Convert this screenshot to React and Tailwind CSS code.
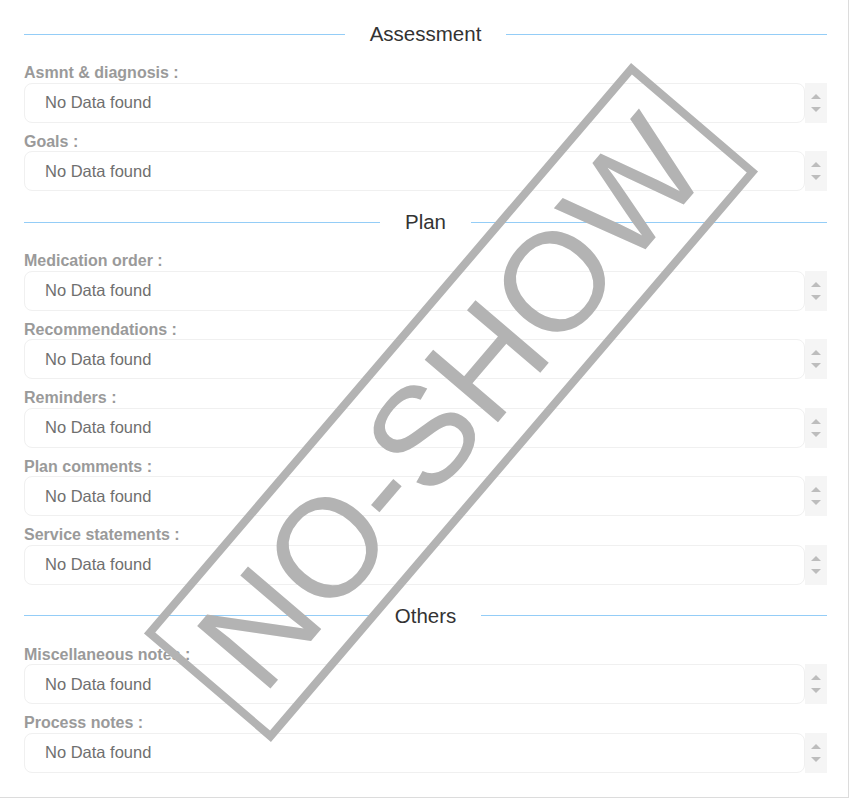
import React from "react";

const sections = [
  {
    title: "Assessment",
    fields: ["Asmnt & diagnosis :", "Goals :"],
  },
  {
    title: "Plan",
    fields: [
      "Medication order :",
      "Recommendations :",
      "Reminders :",
      "Plan comments :",
      "Service statements :",
    ],
  },
  {
    title: "Others",
    fields: ["Miscellaneous notes :", "Process notes :"],
  },
];

const SectionHeader = ({ title, first }) => (
  <div className={`flex items-center h-5 ${first ? "" : "mt-[11px]"} mb-[20px]`}>
    <div className="flex-1 h-px bg-[#94cdf7]" />
    <span className="px-[25px] text-[20.5px] leading-5 text-[#333]">{title}</span>
    <div className="flex-1 h-px bg-[#94cdf7]" />
  </div>
);

const Field = ({ label }) => (
  <div className="flex flex-col mb-[10px]">
    <div className="h-[18.5px] text-[16px] leading-[18.5px] font-bold text-[#9a9a9a] whitespace-nowrap">
      {label}
    </div>
    <div className="flex h-10">
      <div className="flex-1 flex items-center rounded-lg border border-[#f0f0f0] pl-5 text-[16.5px] text-[#6f6f6f]">
        No Data found
      </div>
      <div className="w-[22px] bg-[#f5f5f5] flex flex-col items-center justify-center gap-[8px]">
        <span className="w-0 h-0 border-l-[5px] border-r-[5px] border-b-[5px] border-l-transparent border-r-transparent border-b-[#bdbdbd]" />
        <span className="w-0 h-0 border-l-[5px] border-r-[5px] border-t-[5px] border-l-transparent border-r-transparent border-t-[#bdbdbd]" />
      </div>
    </div>
  </div>
);

export default function App() {
  return (
    <div
      className="relative w-[849px] h-[798px] bg-white border-r border-b border-[#dcdcdc] overflow-hidden"
      style={{ fontFamily: '"Liberation Sans", Arial, sans-serif' }}
    >
      {/* scrollbar remnant on the right edge */}
      <div className="absolute right-[-1px] top-0 w-px h-[46px] bg-[#c4c4c4]" />

      <div className="flex flex-col pt-6 pl-6 pr-[21px]">
        {sections.map((s, i) => (
          <div key={s.title} className="flex flex-col">
            <SectionHeader title={s.title} first={i === 0} />
            {s.fields.map((f) => (
              <Field key={f} label={f} />
            ))}
          </div>
        ))}
      </div>

      {/* NO-SHOW stamp */}
      <div className="absolute left-[76px] top-[318.5px] w-[750px] h-[167px] border-[8px] border-[#b3b3b3] -rotate-[49.5deg] flex items-center justify-center">
        <span className="text-[140px] leading-none text-[#b3b3b3] whitespace-nowrap">
          NO-SHOW
        </span>
      </div>
    </div>
  );
}
